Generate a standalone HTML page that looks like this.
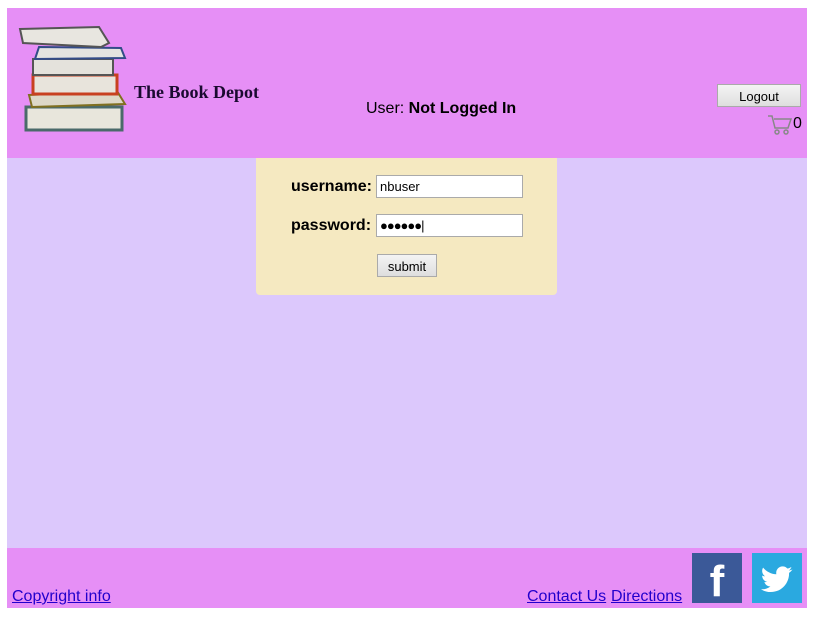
<!DOCTYPE html>
<html><head><style>
body{margin:0;background:#fff;width:826px;height:617px;position:relative;font-family:"Liberation Sans",Arial,sans-serif;overflow:hidden}
.a{position:absolute}
#hdr{left:7px;top:8px;width:800px;height:150px;background:#e68ff6}
#main{left:7px;top:158px;width:800px;height:390px;background:#dcc8fc}
#ftr{left:7px;top:548px;width:800px;height:60px;background:#e68ff6}
.btn{background:linear-gradient(#f4f4f4,#dedede);border:1px solid #aaa;font-size:13px;text-align:center;box-sizing:border-box;color:#000}
.inp{background:#fff;border:1px solid #aaa;box-sizing:border-box;font-size:13px;padding:3px 3px;height:23px}
a{color:#2200cc;text-decoration:underline;font-size:16px}
</style></head><body>
<div class="a" id="hdr"></div>
<div class="a" id="main"></div>
<div class="a" id="ftr"></div>
<svg class="a" style="left:17px;top:25px" width="112" height="108" viewBox="0 0 112 108">
<rect x="9" y="82" width="96" height="23" fill="#e8e6dc" stroke="#4a6a6a" stroke-width="3"/>
<polygon points="12,70 100,66 108,79 15,82" fill="#ddd8c8" stroke="#807020" stroke-width="2"/>
<rect x="16" y="50" width="84" height="19" fill="#e8e4dc" stroke="#c84020" stroke-width="3"/>
<rect x="16" y="34" width="80" height="16" fill="#e4e2dc" stroke="#555" stroke-width="2"/>
<polygon points="22,22 104,23 108,33 18,34" fill="#e4e4e0" stroke="#334c88" stroke-width="2"/>
<polygon points="3,4 82,2 92,18 84,22 6,18" fill="#e8e6e0" stroke="#555" stroke-width="2"/>
</svg>
<div class="a" style="left:134px;top:82px;font-family:'Liberation Serif',serif;font-weight:bold;font-size:18px;color:#1a0a30">The Book Depot</div>
<div class="a" style="left:366px;top:100px;font-size:16px">User: <b>Not Logged In</b></div>
<div class="a btn" style="left:717px;top:84px;width:84px;height:23px;line-height:23px">Logout</div>
<svg class="a" style="left:767px;top:114px" width="26" height="22" viewBox="0 0 26 22"><path d="M1,2H5L8,14H21L24,5H7" fill="none" stroke="#888" stroke-width="1.5"/><circle cx="10" cy="18" r="2" fill="none" stroke="#888" stroke-width="1.5"/><circle cx="19" cy="18" r="2" fill="none" stroke="#888" stroke-width="1.5"/></svg>
<div class="a" style="left:793px;top:115px;font-size:16px">0</div>
<div class="a" style="left:256px;top:158px;width:301px;height:137px;background:#f5e9c1;border-radius:0 0 4px 4px"></div>
<div class="a" style="left:291px;top:178px;font-size:16px;font-weight:bold">username:</div>
<div class="a inp" style="left:376px;top:175px;width:147px">nbuser</div>
<div class="a" style="left:291px;top:217px;font-size:16px;font-weight:bold">password:</div>
<div class="a inp" style="left:376px;top:214px;width:147px;font-size:13px;letter-spacing:-1px">●●●●●●|</div>
<div class="a btn" style="left:377px;top:254px;width:60px;height:23px;line-height:23px">submit</div>
<a class="a" style="left:12px;top:588px">Copyright info</a>
<a class="a" style="left:527px;top:588px">Contact Us</a>
<a class="a" style="left:611px;top:588px">Directions</a>
<div class="a" style="left:692px;top:553px;width:50px;height:50px;background:#3b5998;color:#fff;font-weight:bold;font-size:44px;text-align:center;line-height:58px">f</div>
<div class="a" style="left:752px;top:553px;width:50px;height:50px;background:#2aa9e0"><svg width="50" height="50" viewBox="0 0 24 24"><path transform="translate(4.5,5) scale(0.63)" fill="#fff" d="M23.6 4.6c-.9.4-1.8.6-2.8.8 1-.6 1.8-1.6 2.1-2.7-1 .6-2 1-3.1 1.2C18.9 2.9 17.6 2.3 16.2 2.3c-2.7 0-4.9 2.2-4.9 4.900 0 .4 0 .8.1 1.1C7.3 8.1 3.7 6.1 1.3 3.2.9 3.9.6 4.8.6 5.7c0 1.7.9 3.2 2.2 4.1-.8 0-1.6-.2-2.2-.6v.1c0 2.4 1.7 4.4 3.9 4.8-.4.1-.8.2-1.3.2-.3 0-.6 0-.9-.1.6 2 2.4 3.4 4.6 3.4-1.7 1.3-3.8 2.1-6.1 2.1-.4 0-.8 0-1.2-.1 2.2 1.4 4.8 2.2 7.5 2.2 9.1 0 14-7.5 14-14v-.6c1-.7 1.8-1.6 2.5-2.5z"/></svg></div>
</body></html>
